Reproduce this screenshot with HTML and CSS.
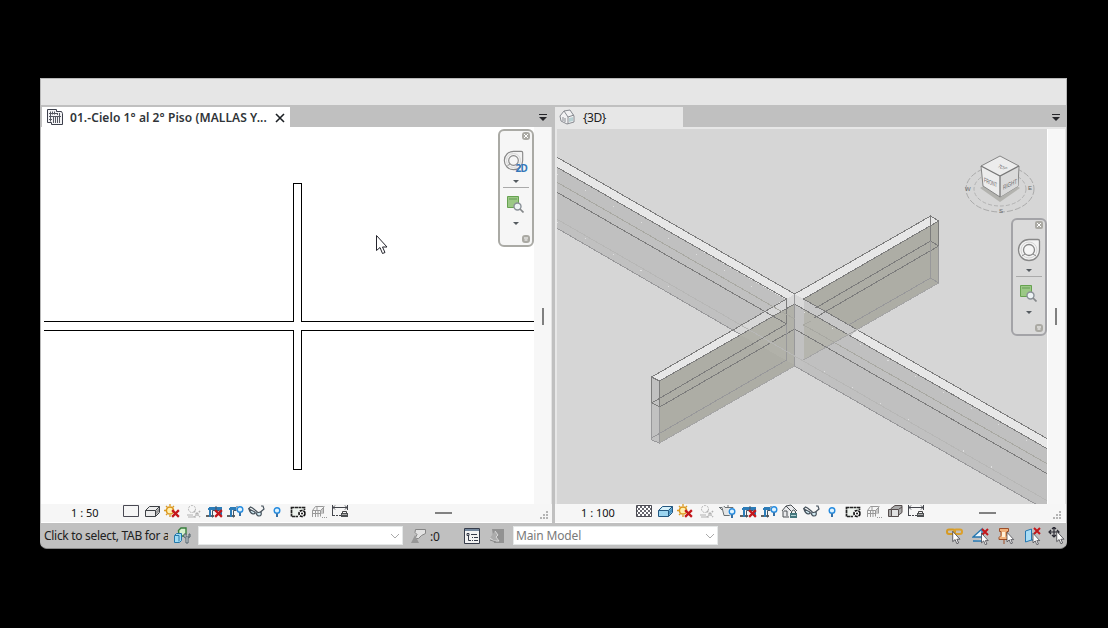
FILE: index.html
```
<!DOCTYPE html>
<html lang="en">
<head>
<meta charset="utf-8">
<title>Model views</title>
<link rel="stylesheet" href="styles.css">
</head>
<body>
<svg class="sprite" aria-hidden="true">
  <symbol id="detail" viewBox="0 0 20 16"><path d="M2.500 1.500h15v11h-15z" fill="#f6f6f6" stroke="#494953"/></symbol>
  <pattern id="checks" width="4" height="4" patternUnits="userSpaceOnUse"><path fill="#fff" d="M0 0h4v4H0z"/><path fill="#66666e" d="M0 0h2v2H0zM2 2h2v2H2z"/></pattern>
  <symbol id="fine" viewBox="0 0 20 16"><path d="M2.500 1.500h15v11h-15z" fill="url(#checks)" stroke="#4c4c54"/></symbol>
  <symbol id="box" viewBox="0 0 20 16"><path d="M2.500 6.500 6.500 2.500h10v6l-4 4h-10z" fill="#ececec" stroke="#3c4044"/><path d="M2.500 6.500h10v6m0-6 4-4" fill="none" stroke="#3c4044"/><path d="m13 7 3-3v4l-3 3z" fill="#999"/></symbol>
  <symbol id="boxblue" viewBox="0 0 20 16"><path d="M3.500 6.500 7.500 2.500h10v6l-4 4h-10z" fill="#9bd4ef" stroke="#235780"/><path d="M3.500 6.500h10v6m0-6 4-4" fill="none" stroke="#235780"/><path d="m14 7 3-3v4l-3 3z" fill="#4893c4"/><path d="m5 6 3-3h8l-3 3z" fill="#d8f1fa"/></symbol>
  <symbol id="cross" viewBox="0 0 8 8"><path d="m1 1 6 6m0-6-6 6" stroke="#c3171b" stroke-width="2"/></symbol>
  <symbol id="sun" viewBox="0 0 20 16"><circle cx="7" cy="6.500" r="3.600" fill="#fff0b0" stroke="#dc9619" stroke-width="1.500"/><path d="M7 0v2M1 6.500h2M3 2l1.500 1.500M11 2 9.500 3.500M3 11l1.500-1.500M7 11v2" stroke="#d99a24" stroke-width="1.300"/><use href="#cross" x="8" y="5" width="9" height="9"/></symbol>
  <symbol id="shadow" viewBox="0 0 20 16"><g fill="none" stroke="#b2b2b2"><circle cx="8" cy="5" r="3.500" stroke-dasharray="2 1"/><path d="M3 11h6M4 13h8"/><path d="m10 7 6 6m0-6-6 6" stroke-width="1.600" stroke-dasharray="1.500 1"/></g></symbol>
  <symbol id="bulb" viewBox="0 0 20 16"><circle cx="9" cy="6.500" r="2.800" fill="#dff3ff" stroke="#258bdf" stroke-width="1.400"/><path d="M8 9.500h2V13H8z" fill="#3670a5"/></symbol>
  <symbol id="crop" viewBox="0 0 20 16"><path d="M1 12h4M6 12h3" stroke="#333" stroke-width="1.600"/><path d="M5 13V4h11v7M3 5h14" fill="none" stroke="#2c7cb8" stroke-width="2"/><path d="M7.500 13.500v-7h7v4M11 2v3" fill="none" stroke="#405566"/></symbol>
  <symbol id="cropx" viewBox="0 0 20 16"><use href="#crop" width="20" height="16"/><use href="#cross" x="9" y="5" width="9" height="9"/></symbol>
  <symbol id="cropb" viewBox="0 0 20 16"><use href="#crop" width="20" height="16"/><path fill="#f6f6f6" d="M10.500 3H18v11h-7.500z"/><use href="#bulb" x="5" y="-1" width="20" height="16"/></symbol>
  <symbol id="teapot" viewBox="0 0 20 16"><path d="M1 3.500h3l2 8h7l2-8H7L6 2m4 1V1M4 6 2 4" fill="#e4e5e5" stroke="#6a7073"/><circle cx="14" cy="8" r="4" fill="#f5f5f5"/><use href="#bulb" x="5" y="1" width="20" height="16"/></symbol>
  <symbol id="glasses" viewBox="0 0 20 16"><path d="m1.500 5 2-2 2 1 5 4M13.500 8l3.500-3-1-3-2 0" fill="none" stroke="#46525c" stroke-width="1.200"/><path d="m2 5 6 3q0 2-2 2-3-1-4-5zM9 9l5-1q1 4-2 4-2 0-3-3z" fill="#cfe8f0" stroke="#46525c" stroke-width="1.200"/></symbol>
  <symbol id="temp" viewBox="0 0 20 16"><path d="M2.500 3.500h13v9h-13z" fill="#eef3ee" stroke="#222" stroke-width="1.700" stroke-dasharray="3 .5"/><path fill="#f5f5f5" d="M9 6h8v8H9z"/><circle cx="13" cy="9.500" r="3" fill="#fff" stroke="#111" stroke-dasharray="3 .8" stroke-width="1.700"/><circle cx="13" cy="9.500" r="1" fill="#111"/></symbol>
  <symbol id="frame" viewBox="0 0 20 16"><g fill="none" stroke="#999"><path d="M2.500 13V6.500l3-4h8v7M2.500 6.500h8v6M5.500 6v7M8 6v7M10.500 6.500l4-4M2 9.500h9M7 2v4M12 5v5"/><path d="M12 13.500h5" stroke-dasharray="1 1"/></g></symbol>
  <symbol id="dimension" viewBox="0 0 20 16"><path d="M2.500 1v11M17.500 1v5M3 3.500h14" fill="none" stroke="#44464c"/><path d="M3 11.500h8" stroke="#44464c" stroke-dasharray="2 1"/><path d="m5 1.500-2 2 2 2m10-4 2 2-2 2" fill="none" stroke="#44464c"/><path d="M12.500 9V7.500h4V9" fill="none" stroke="#444"/><path fill="#4c4f51" d="M11 9h7v4h-7z"/><path fill="#aaa" d="M12 10h5v1h-5z"/></symbol>
  <symbol id="homelock" viewBox="0 0 20 16"><path d="m1 7 4-5 5-1 6 6-3 1v5H2V7" fill="#e9eaec" stroke="#4a4f53"/><path d="m5 2 5 5v6M3 7h3v5" fill="none" stroke="#4a4f53"/><path fill="#f5f5f5" d="M8 7h9v7H8z"/><path d="M10.500 10V7.500q2-3 4 0V10" fill="none" stroke="#344"/><path d="M9 9h7v5H9z" fill="#44777d"/><path d="M10 11h5v1h-5z" fill="#b2d4d6"/></symbol>
  <symbol id="displaced" viewBox="0 0 20 16"><path d="M2.500 5.500h7v7h-7zM5 4.500l4-3h7v7l-4 3z" fill="#aaa" stroke="#544c4c"/><path d="M5.500 5.500h7v7h-7zM13 5l3-2" fill="#e1e1e1" stroke="#544c4c"/></symbol>
  <symbol id="cursor" viewBox="0 0 12 19"><path d="M.5.500v15l3.500-3 2.500 6 2.500-1-2.500-5.500H11z" fill="#fff" stroke="#24242c"/></symbol>
  <symbol id="corner" viewBox="0 0 10 10"><path fill="#b4b4b4" d="M7 1h2v2H7zM4 4h2v2H4zM7 4h2v2H7zM1 7h2v2H1zM4 7h2v2H4zM7 7h2v2H7z"/></symbol>
  <symbol id="menu" viewBox="0 0 10 8"><path fill="#252529" d="M1 1h8v1H1zM1 4h8L5 8z"/></symbol>
  <symbol id="wheel" viewBox="0 0 24 24"><path d="M12 1.500h9q1.500 0 1.500 1.500v9A10.500 10.500 0 1 1 12 1.500z" fill="#f3f3f3" stroke="#888" stroke-width="1.300"/><circle cx="12" cy="12" r="8" fill="none" stroke="#d5d5d5"/><circle cx="12" cy="12" r="5.500" fill="#f6f6f6" stroke="#888" stroke-width="1.300"/><path d="m5 18 3-2m11 2-3-2" stroke="#888"/></symbol>
  <symbol id="zoomregion" viewBox="0 0 17 17"><path fill="#9bc886" stroke="#66a250" d="M.5.500h11v11H.5z"/><path d="M2 3h8" stroke="#649b55"/><circle cx="10.500" cy="10.500" r="3.500" fill="#edf3f5" stroke="#899097" stroke-width="1.400"/><path d="m13 13 3.500 3.500" stroke="#85888a" stroke-width="1.700"/></symbol>
</svg>

<main class="app">
  <div class="ribbon"></div>
  <div class="workspace">
    <section class="pane plan">
      <header class="tabs">
        <div class="tab active">
          <svg class="tab-icon" viewBox="0 0 16 16"><path d="M.5.500h9v2h5l1 2v11h-11v-2h-4z" fill="#f3f3f5" stroke="#3c3f4b"/><path d="M3.500 2.500v10m2-10v3m2-3v3M2 4.500h8M2 7.500h12M2 10.500h3M6.500 8v6m2-6v6m2-6v6m2-10v10M10.500 4v2" stroke="#555861"/></svg>
          <span class="plan-title">01.-Cielo 1° al 2° Piso (MALLAS Y...</span>
          <svg class="close" viewBox="0 0 10 10"><path d="m1 1 8 8m0-8-8 8" stroke="#1c2024" stroke-width="1.600"/></svg>
        </div>
        <svg class="tab-menu"><use href="#menu"/></svg>
      </header>
      <div class="view">
        <svg class="drawing" viewBox="42 127 492 377" shape-rendering="crispEdges">
          <path d="M44 321.500h249.500v-138h8v138H534M44 330.500h249.500v139h8v-139H534" fill="none" stroke="#000"/>
          <use href="#cursor" x="376" y="235" width="12" height="19" shape-rendering="geometricPrecision"/>
        </svg>
        <div class="scroll"><i></i></div>
        <aside class="nav">
          <svg class="dismiss" viewBox="0 0 8 8"><rect width="8" height="8" rx="3" fill="#aaa9a3"/><path d="m2 2 4 4m0-4-4 4" stroke="#fff"/></svg>
          <div class="wheel-wrap"><svg class="wheel"><use href="#wheel"/></svg><b>2D</b></div>
          <span class="arrow"></span><hr>
          <svg class="region"><use href="#zoomregion"/></svg><span class="arrow second"></span>
          <svg class="collapse" viewBox="0 0 8 8"><rect width="8" height="8" rx="3" fill="#aaa9a3"/><path d="M2 3h4M2.500 5h3" stroke="#fff"/></svg>
        </aside>
      </div>
      <footer class="viewbar">
        <span class="scale">1 : 50</span>
        <div class="tools">
          <svg><use href="#detail"/></svg><svg class="plan-box"><use href="#box"/></svg><svg><use href="#sun"/></svg><svg><use href="#shadow"/></svg><svg><use href="#cropx"/></svg><svg><use href="#cropb"/></svg><svg><use href="#glasses"/></svg><svg><use href="#bulb"/></svg><svg><use href="#temp"/></svg><svg><use href="#frame"/></svg><svg class="last"><use href="#dimension"/></svg>
        </div>
        <i class="thumb"></i><svg class="grip"><use href="#corner"/></svg>
      </footer>
    </section>

    <section class="pane model">
      <header class="tabs">
        <div class="tab">
          <svg class="tab-icon" viewBox="0 0 16 16"><path d="m1 7 4-5 6-1 4 6v6l-7 2-6-3z" fill="#f2f2f3" stroke="#888b91"/><path d="m5 2 4 6v7M9 8l6-2M4 8v4m2-3v4" fill="none" stroke="#888b91"/><path fill="#b8d0d3" d="m10 9 4-1v4l-4 1z"/></svg>
          <span class="model-title">{3D}</span>
        </div>
        <svg class="tab-menu"><use href="#menu"/></svg>
      </header>
      <div class="view">
        <svg class="drawing" viewBox="557 129 490 375">
          <g shape-rendering="crispEdges" transform="translate(-.4 0)">
            <path fill="#c0c0c0" d="M557 167 787 299v61l-47-26-183-106z"/>
            <path fill="#e7e7e7" d="M557 157 795 294l-8 6-230-133z"/>
            <path fill="#adada5" d="M804 299 939 221v62l-135 77z"/>
            <path fill="#e7e7e7" d="M795 294 931 216l8 5-135 78z"/>
            <path fill="#c0c0c0" d="M795 304 1048 449v62L795 366z"/>
            <path fill="#e7e7e7" d="m804 299 244 140v10L795 304z"/>
            <path fill="#b5b5ae" d="m804 309 43 25v2l-43 24z"/>
            <path fill="#c8c8c8" d="m795 304 9-5 54 31-8 6z"/>
            <path fill="#adada5" d="M660 381 795 304v62l-135 77z"/>
            <path fill="#b1b1a9" d="m741 335 54-31v61z"/>
            <path fill="#e7e7e7" d="m652 377 135-78 8 5-135 77z"/>
            <path fill="#d7d7d7" d="m733 330 54-31 8 5-54 31z"/>
            <path fill="#c1c1c1" d="m652 377 8 4v62l-8-3zM795 304l9 5v59l-9-4z"/>
            <path fill="#d9d9d9" d="m787 299 8-5 9 5v10l-9-5z"/>
            <g fill="none" stroke="#7c7c7c">
              <path d="M557 157 795 294 931 216l8 5v25l-8-5v-25M557 167l230 132-135 78 8 4 135-77 253 145M804 299l244 140M804 299l135-78M652 377v26l8 4v-26M787 299v25M795 304v25M557 192l230 132-135 79m8 4 135-78 253 145M931 241l-115 67m-1 10 124-72"/>
            </g>
            <g fill="none" stroke="#98989a">
              <path d="M557 228 740 334M795 366l253 145M652 403v37l8 3v-36M787 324v36L652 438M795 294v72M931 241v37l8 5v-37M931 278l-82 47"/>
              <path stroke="#a8a8a2" d="m557 182 238 137m9 6 244 139M811 321l-7 4"/>
              <path stroke="#b7b7b6" d="m557 219 238 137m0 0 253 145"/>
              <path stroke="#a5a5a5" d="m660 443 135-77M804 360l135-77"/>
            </g>
            <g fill="none" stroke="#dfdfdf" stroke-dasharray="1 31"><path d="m558 174 225 130m-225-82 185 108m62-18 240 139m-220-80 205 118"/></g>
          </g>
          <g>
            <ellipse cx="1000" cy="189" rx="34" ry="23" fill="none" stroke="#aaa" stroke-dasharray="6 2"/>
            <ellipse cx="1000" cy="189" rx="26" ry="17" fill="none" stroke="#b2b2b2" stroke-dasharray="4 2"/>
            <path d="m980 188 20 14 20-14-20-12z" fill="#b3b3af"/>
            <path d="m981 166 19-10 19 10-1 20-18 11-17-11z" fill="#ececec" stroke="#858585"/>
            <path d="m1000 176 18-9v19l-18 11z" fill="#dadada"/>
            <path d="m981 166 19 10 19-10m-19 10v21" fill="none" stroke="#777" stroke-width="1.300"/>
            <g class="cube-text"><text textLength="13" lengthAdjust="spacingAndGlyphs" transform="matrix(1 .42 0 1.100 984 182)">FRONT</text><text textLength="14" lengthAdjust="spacingAndGlyphs" transform="matrix(1 -.5 0 1.100 1003 190)">RIGHT</text><text textLength="10" lengthAdjust="spacingAndGlyphs" transform="matrix(.8 .35 -.7 .6 997 167)">TOP</text><text x="965" y="191">W</text><text x="1028" y="190">E</text><text x="999" y="213">S</text></g>
          </g>
        </svg>
        <div class="scroll"><i></i></div>
        <aside class="nav">
          <svg class="dismiss" viewBox="0 0 8 8"><rect width="8" height="8" rx="2" fill="#aaa9a3"/><path d="m2 2 4 4m0-4-4 4" stroke="#fff"/></svg>
          <div class="wheel-wrap"><svg class="wheel"><use href="#wheel"/></svg></div>
          <span class="arrow"></span><hr>
          <svg class="region"><use href="#zoomregion"/></svg><span class="arrow second"></span>
          <svg class="collapse" viewBox="0 0 8 8"><rect width="8" height="8" rx="3" fill="#aaa9a3"/><path d="M2 3h4M2.500 5h3" stroke="#fff"/></svg>
        </aside>
      </div>
      <footer class="viewbar">
        <span class="scale">1 : 100</span>
        <div class="tools">
          <svg><use href="#fine"/></svg><svg><use href="#boxblue"/></svg><svg><use href="#sun"/></svg><svg><use href="#shadow"/></svg><svg><use href="#teapot"/></svg><svg><use href="#cropx"/></svg><svg><use href="#cropb"/></svg><svg><use href="#homelock"/></svg><svg><use href="#glasses"/></svg><svg><use href="#bulb"/></svg><svg><use href="#temp"/></svg><svg><use href="#frame"/></svg><svg><use href="#displaced"/></svg><svg class="last"><use href="#dimension"/></svg>
        </div>
        <i class="thumb"></i><svg class="grip"><use href="#corner"/></svg>
      </footer>
    </section>
  </div>
  <footer class="status">
    <span class="hint">Click to select, TAB for a</span>
    <svg class="workset" viewBox="0 0 18 17"><path d="M5.500 3.500 8 1h5v6l-2 2H6z" fill="#d5f0cd" stroke="#367d3b" stroke-width="1.400"/><path d="m1.500 8.500 2-2h5v7l-2 2h-5zM2 8.500h4v6" fill="#a0dcf4" stroke="#2478aa"/><path d="M11 7v3l2 1v5h2v-5l2-1V7h-1v3h-3V7z" fill="#e4e9eb" stroke="#4c5e69"/></svg>
    <div class="combo first"><svg viewBox="0 0 10 6"><path d="m1 1 4 4 4-4" fill="none" stroke="#aaa"/></svg></div>
    <svg class="filter" viewBox="0 0 16 16"><path d="M4.500 1.500h10v4l-4 2-3 3H4l2-4-2-2z" fill="#e2e2e2" stroke="#858585"/><path fill="#979797" d="m4 7-4 8h8l-2-4z"/></svg>
    <span class="count">:0</span>
    <svg class="options" viewBox="0 0 16 16"><path d="M.5.500h15v15H.5z" fill="#f3f3f3" stroke="#353b49"/><path fill="#73869c" d="M1 1h14v2H1z"/><path d="M3 5.500h2v2H3zM7 6.500h6M8 9.500h1m1 0h4M8 12.500h1m1 0h4M4.500 8v4.500H7" fill="none" stroke="#353b49"/></svg>
    <svg class="options exclude" viewBox="0 0 16 16"><path fill="#929292" d="M3 1h12v14H5z"/><path d="m1 10 4 3h5L7 9l2-2-3-4" fill="#acacac" stroke="#d8d8d8"/><path d="m1 12 6 2" stroke="#888"/></svg>
    <div class="combo"><span>Main Model</span><svg viewBox="0 0 10 6"><path d="m1 1 4 4 4-4" fill="none" stroke="#aaa"/></svg></div>
    <div class="select-tools">
      <svg viewBox="0 0 18 18"><rect x="1" y="2.500" width="8" height="4.500" rx="2" fill="none" stroke="#d69a22" stroke-width="2"/><rect x="8" y="2.500" width="8" height="4.500" rx="2" fill="none" stroke="#dca02b" stroke-width="2"/><use href="#cursor" x="6" y="4" width="9" height="13"/></svg>
      <svg viewBox="0 0 18 18"><path d="m1 10 9-8v8zM1 14h9l2-2" fill="#eaf7ff" stroke="#2376b0" stroke-width="1.300"/><use href="#cross" x="9" y="1" width="8" height="8"/><use href="#cursor" x="9" y="6" width="8" height="12"/></svg>
      <svg viewBox="0 0 18 18"><path d="M1.500 1.500h9v3H9v4l2 2v2H1v-2l2-2v-4H1.500zM6 12v5" fill="#f1b27c" stroke="#9d4e29"/><path d="M4 5h3v5H4z" fill="#fff0d8"/><use href="#cursor" x="8" y="5" width="9" height="12"/></svg>
      <svg viewBox="0 0 18 18"><path d="m1.500 4 6-2v11l-6 2z" fill="#a8dcf4" stroke="#2378b3"/><path d="M7 13h3" stroke="#2378b3"/><use href="#cross" x="9" y="0" width="8" height="8"/><use href="#cursor" x="8" y="6" width="9" height="12"/></svg>
      <svg class="drag" viewBox="0 0 18 18"><path d="M6 0v10M1 5h10M4 2l2-2 2 2M4 8l2 2 2-2M3 3 1 5l2 2m6-4 2 2-2 2" fill="none" stroke="#292933" stroke-width="1.200"/><use href="#cursor" x="8" y="4" width="9" height="13"/></svg>
    </div>
  </footer>
</main>
</body>
</html>
```
FILE: styles.css
```
* { box-sizing: border-box; }
body { margin: 0; width: 1108px; height: 628px; padding: 78px 41px 79px 40px; background: #000; overflow: hidden; font-family: "Noto Sans", sans-serif; font-size: 12px; color: #202020; }
svg { display: block; flex: none; }
.sprite { position: absolute; width: 0; height: 0; }
.app { width: 1027px; height: 471px; display: flex; flex-direction: column; background: #c0c0c0; border: 1px solid #b8b8b8; border-bottom-color: #888; border-radius: 0 0 7px 7px; overflow: hidden; }
.ribbon { height: 26px; flex: none; background: #e6e6e6; }
.workspace { display: flex; gap: 3px; height: 418px; flex: none; }
.pane { width: 511px; display: flex; flex-direction: column; background: #f7f7f7; flex: none; }
.tabs { height: 22px; display: flex; align-items: flex-end; background: #c0c0c0; padding-left: 1px; flex: none; }
.tab { height: 20px; width: 128px; display: flex; align-items: center; background: #e7e7e7; padding-left: 4px; white-space: nowrap; font-size: 12px; }
.tab.active { width: 248px; padding: 0 5px; background: #fff; font-weight: 600; letter-spacing: .07px; color: #303438; }
.model .tabs { padding-left: 0; }
.tab-icon { width: 16px; height: 16px; margin-right: 8px; }
.active .tab-icon { margin-right: 7px; }
.model-title { letter-spacing: -.5px; }
.tab .close { width: 10px; height: 10px; margin: 1px 0 0 auto; }
.tab-menu { width: 10px; height: 8px; margin: 0 4px 6px auto; }
.model .tab-menu { margin-right: 5px; }
.view { position: relative; display: flex; height: 377px; padding-left: 1px; flex: none; background: #fff; }
.model .view { padding: 2px 0 0 2px; background: #e7e7e7; }
.drawing { width: 492px; height: 377px; background: #fff; }
.model .drawing { width: 490px; height: 375px; background: #d6d6d6; }
.scroll { flex: 1; background: #f7f7f7; border-right: 1px solid #e3e3e3; padding: 181px 0 0 8px; }
.model .scroll { padding: 179px 0 0 7px; border-left: 1px solid #fff; }
.scroll i { display: block; width: 2px; height: 17px; background: #808080; }
.nav { position: absolute; left: 457px; top: 2px; width: 36px; height: 118px; border: 2px solid #aaaaa5; border-radius: 6px; background: #f6f6f6; display: flex; flex-direction: column; align-items: center; padding-right: 1px; }
.model .nav { left: 456px; top: 91px; background: #dadada; border-color: #a3a3a7; }
.dismiss, .collapse { width: 8px; height: 8px; align-self: flex-end; margin-right: 1px; }
.dismiss { margin-top: 1px; }
.wheel-wrap { position: relative; margin-top: 9px; height: 26px; width: 28px; }
.wheel { width: 21px; height: 21px; margin: 1px 0 0 1px; }
.model .wheel { width: 24px; height: 24px; margin: 0 0 0 2px; }
.wheel-wrap b { position: absolute; left: 14px; top: 13px; font-size: 10px; line-height: 12px; color: #3577b8; letter-spacing: -.8px; }
.arrow { width: 0; height: 0; border: 3px solid transparent; border-top-color: #555b60; border-bottom: 0; margin-top: 5px; }
.nav hr { width: 26px; margin: 4px 0 8px; border: 0; height: 1px; background: #aaa; flex: none; }
.region { width: 17px; height: 17px; }
.arrow.second { margin-top: 9px; }
.collapse { margin-top: auto; margin-bottom: 2px; }
.viewbar { height: 19px; display: flex; align-items: flex-start; background: #f6f6f6; border-bottom: 1px solid #fff; flex: none; }
.scale { width: 80px; padding: 1px 0 0 30px; font-size: 11px; line-height: 16px; color: #111; white-space: nowrap; flex: none; }
.model .scale { width: 79px; padding-left: 26px; }
.tools { display: flex; gap: 1px; }
.tools svg { width: 20px; height: 16px; }
.tools .plan-box { margin-left: 1px; margin-right: -1px; }
.tools .last { margin-left: -1px; }
.thumb { width: 17px; height: 2px; background: #818181; margin: 8px 0 0 85px; }
.model .thumb { margin-left: 53px; }
.grip { width: 10px; height: 10px; margin: 6px 3px 0 auto; }
.model .grip { margin-right: 4px; }
.status { height: 25px; display: flex; align-items: center; padding: 0 0 0 3px; background: #c0c0c0; flex: none; }
.hint { width: 124px; overflow: hidden; white-space: nowrap; letter-spacing: -.3px; flex: none; }
.workset { width: 18px; height: 17px; margin-left: 5px; }
.combo { width: 205px; height: 19px; background: #fff; border: 1px solid #e5e8e8; display: flex; align-items: center; color: #7a7a7a; padding-left: 2px; line-height: 17px; letter-spacing: -.15px; flex: none; }
.combo.first { margin-left: 7px; }
.combo svg { width: 10px; height: 6px; margin: 1px 2px 0 auto; }
.filter { width: 16px; height: 16px; margin-left: 8px; }
.count { width: 37px; padding: 1px 0 0 3px; letter-spacing: -.3px; flex: none; }
.options { width: 16px; height: 16px; margin-right: 9px; }
.exclude { margin-right: 8px; }
.select-tools { display: flex; gap: 8px; margin-left: 228px; flex: none; }
.select-tools svg { width: 18px; height: 18px; }
.select-tools .drag { margin-left: -2px; }
.cube-text { font: 6px "Liberation Sans", sans-serif; fill: #666; }
```
